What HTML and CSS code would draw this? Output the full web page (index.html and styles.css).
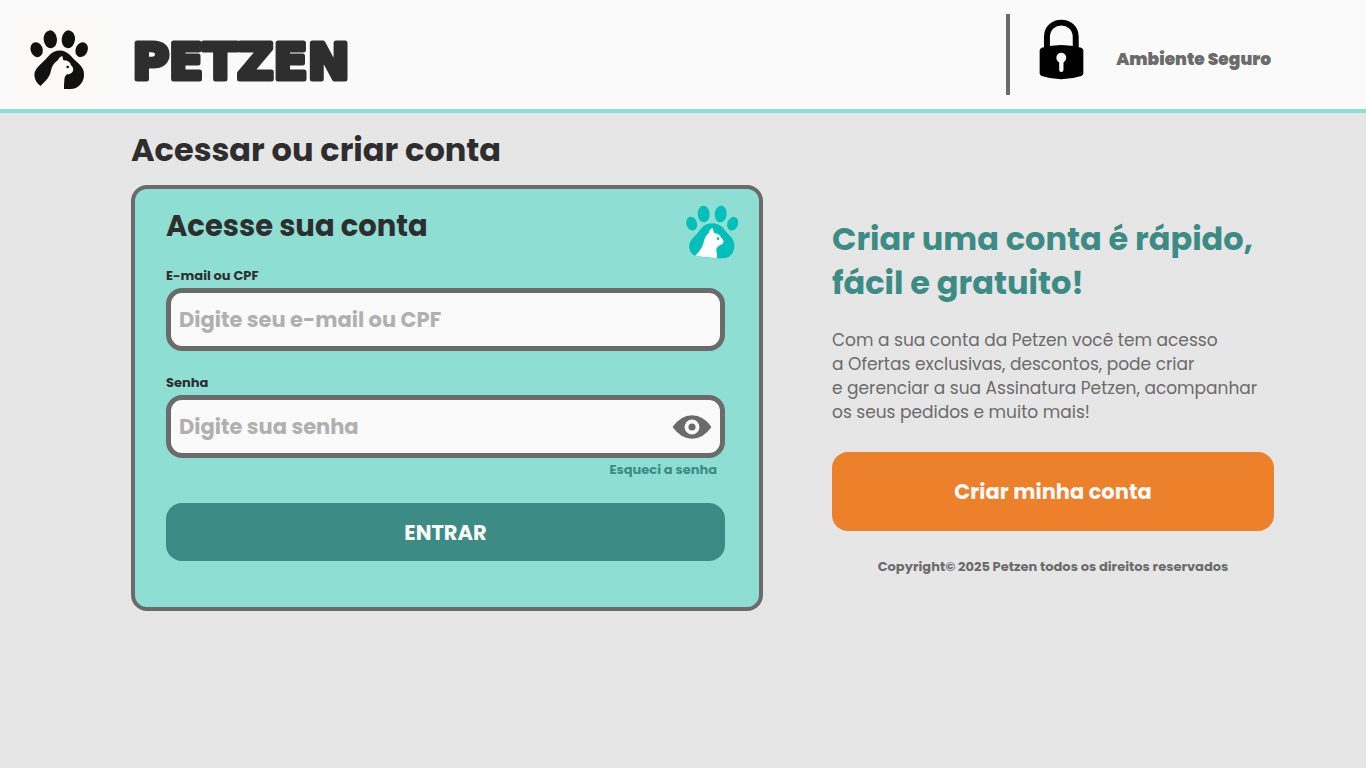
FILE: index.html
```html
<!DOCTYPE html>
<html lang="pt-BR">
<head>
<meta charset="utf-8">
<meta name="viewport" content="width=device-width, initial-scale=1">
<title>Petzen - Acessar ou criar conta</title>
<link rel="stylesheet" href="styles.css">
</head>
<body>
<header class="topbar">
  <a class="brand" href="#" aria-label="Petzen">
    <svg class="brand-mark" viewBox="48 12 255 279" aria-hidden="true">
      <rect x="48" y="12" width="255" height="279" fill="#fbf9f7"/>
      <g fill="#111">
        <ellipse cx="110" cy="119" rx="18" ry="23" transform="rotate(-20 110 119)"/>
        <ellipse cx="151" cy="88" rx="20" ry="27" transform="rotate(-6 151 88)"/>
        <ellipse cx="205" cy="88" rx="20" ry="27" transform="rotate(6 205 88)"/>
        <ellipse cx="245" cy="119" rx="18" ry="23" transform="rotate(24 245 119)"/>
        <path d="M122 228C103 215 98 191 109 177C120 163 134 152 145 139C163 115 195 116 213 138C224 152 246 165 251 183C257 214 237 237 211 237H150Z"/>
      </g>
      <path fill="#fbf9f7" d="M121 229C139 210 150 201 153 181C156 167 164 157 174 150C177 143 182 139 187 138L190 151C203 151 211 156 213 166C219 171 221 177 219 183C216 190 209 193 201 193C191 200 194 212 192 225V240H120Z"/>
      <circle cx="203" cy="171" r="4" fill="#111"/>
    </svg>
    <svg class="brand-name" viewBox="0 0 230 70" aria-hidden="true">
      <text x="115" y="53" text-anchor="middle">PETZEN</text>
    </svg>
  </a>
  <div class="secure">
    <svg class="lock" viewBox="147 42 136 184" aria-hidden="true">
      <path d="M171 130V97C171 38 258 38 258 97V130" fill="none" stroke="#000" stroke-width="18"/>
      <path d="M149 137Q149 132 155 129Q214 112 275 129Q281 132 281 137V206Q281 211 275 214Q214 234 155 214Q149 211 149 206Z"/>
      <path fill="#fafafa" d="M208 173C194 166 198 144 214 144C231 144 235 166 221 173V196Q221 202 214 202Q208 202 208 196Z"/>
    </svg>
    <span>Ambiente Seguro</span>
  </div>
</header>
<main class="page">
  <h1 class="page-title">Acessar ou criar conta</h1>
  <form class="card">
    <div class="card-head">
      <h2>Acesse sua conta</h2>
      <svg class="paw" viewBox="45 74 160 162" aria-hidden="true">
        <g fill="#03bfb9">
          <ellipse cx="64" cy="130" rx="16" ry="21" transform="rotate(-18 64 130)"/>
          <ellipse cx="100" cy="101" rx="18" ry="25" transform="rotate(-4 100 101)"/>
          <ellipse cx="151" cy="101" rx="18" ry="25" transform="rotate(6 151 101)"/>
          <ellipse cx="187" cy="130" rx="16" ry="21" transform="rotate(22 187 130)"/>
          <path d="M77 228C54 220 50 191 67 174C87 158 94 129 125 129C156 129 161 151 180 168C201 186 195 231 161 234H130Z"/>
        </g>
        <path fill="#fff" d="M74 227C94 206 98 195 102 178C105 166 111 162 116 157C117 149 121 144 127 143L131 158C142 158 150 165 153 173C160 177 162 187 155 192C147 195 142 198 139 204C136 213 142 221 140 234Z"/>
        <circle cx="143" cy="175" r="4" fill="#03bfb9"/>
      </svg>
    </div>
    <div class="field">
      <label for="login">E-mail ou CPF</label>
      <div class="control"><input id="login" type="text" placeholder="Digite seu e-mail ou CPF"></div>
    </div>
    <div class="field">
      <label for="password">Senha</label>
      <div class="control">
        <input id="password" type="password" placeholder="Digite sua senha">
        <button class="reveal" type="button" aria-label="Mostrar senha">
          <svg viewBox="48 89 122 74" aria-hidden="true">
            <path fill="#6b6b6b" d="M49 126Q75 90 109 90Q144 90 169 126Q144 162 109 162Q75 162 49 126Z"/>
            <circle cx="109" cy="126" r="17" fill="#6b6b6b" stroke="#fafafa" stroke-width="12"/>
          </svg>
        </button>
      </div>
    </div>
    <a class="forgot" href="#">Esqueci a senha</a>
    <button class="enter" type="submit">ENTRAR</button>
  </form>
  <section class="signup">
    <h2>Criar uma conta é rápido,<br>fácil e gratuito!</h2>
    <p>Com a sua conta da Petzen você tem acesso<br>a Ofertas exclusivas, descontos, pode criar<br>e gerenciar a sua Assinatura Petzen, acompanhar<br>os seus pedidos e muito mais!</p>
    <button class="create" type="button">Criar minha conta</button>
    <small>Copyright© 2025 Petzen todos os direitos reservados</small>
  </section>
</main>
</body>
</html>
```
FILE: styles.css
```css
* { box-sizing: border-box; }

body {
  margin: 0;
  min-height: 100vh;
  background: #e6e6e6;
  color: #2e2e2e;
  font-family: Poppins, Inter, sans-serif;
}

h1, h2, p { margin: 0; }
button, input { font-family: inherit; }
button { border: 0; cursor: pointer; }
svg { display: block; }

.topbar {
  display: flex;
  align-items: flex-start;
  justify-content: space-between;
  padding: 14px 95px 0 16px;
  min-height: 113px;
  background: #fafafa;
  border-bottom: 4px solid #8eded3;
}

.brand { display: flex; align-items: center; gap: 25px; }
.brand-mark { width: 85px; height: 93px; }
.brand-name { width: 230px; height: 70px; }

.brand-name text {
  font: 700 50px "DejaVu Sans", sans-serif;
  fill: #2e2e2e;
  stroke: #2e2e2e;
  stroke-width: 5px;
  stroke-linejoin: round;
}

.secure {
  display: flex;
  align-items: center;
  gap: 32px;
  height: 81px;
  padding-left: 29px;
  border-left: 4px solid #6b6b6b;
  color: #6b6b6b;
  font-size: 17px;
  font-weight: 900;
  line-height: 28px;
}

.lock { width: 45px; height: 61px; margin-bottom: 10px; }
.secure span { margin-top: 8px; }

.page {
  display: grid;
  grid-template-columns: 632fr 442fr;
  column-gap: 69px;
  align-items: start;
  padding: 13px 92px 40px 131px;
}

.page-title {
  grid-column: 1 / -1;
  margin-bottom: 11px;
  font-size: 32px;
  line-height: 48px;
}

.card {
  display: flex;
  flex-direction: column;
  padding: 16px 34px 46px 31px;
  background: #8eded3;
  border: 4px solid #6b6b6b;
  border-radius: 16px;
}

.card-head {
  display: flex;
  justify-content: space-between;
  margin: 0 -14px 8px 0;
}

.card-head h2 { font-size: 29px; line-height: 42px; }
.paw { width: 54px; height: 54px; }

.field { display: flex; flex-direction: column; gap: 3px; }
.field + .field { margin-top: 23px; }
.field label { font-size: 13px; font-weight: 700; line-height: 18px; }

.control {
  display: flex;
  align-items: center;
  height: 63px;
  padding: 0 8px;
  background: #fafafa;
  border: 5px solid #6b6b6b;
  border-radius: 16px;
}

.control input {
  flex: 1;
  min-width: 0;
  padding: 0;
  border: 0;
  outline: 0;
  background: transparent;
  color: #2e2e2e;
  font-size: 21px;
  font-weight: 700;
  line-height: 32px;
}

.control input::placeholder { color: #b0b0b0; opacity: 1; }

.reveal { padding: 0; background: transparent; }
.reveal svg { width: 40px; height: 24px; }

.forgot {
  align-self: flex-end;
  margin: 3px 8px 24px 0;
  color: #3c8c85;
  font-size: 13px;
  font-weight: 700;
  line-height: 18px;
  text-decoration: none;
}

.enter, .create {
  border-radius: 16px;
  color: #fafafa;
  font-size: 21px;
  font-weight: 700;
}

.enter { height: 58px; background: #3c8c85; }

.signup {
  display: flex;
  flex-direction: column;
  padding-top: 32px;
}

.signup h2 {
  color: #3c8c85;
  font-size: 32px;
  line-height: 44px;
}

.signup p {
  margin: 23px 0 28px;
  color: #6b6b6b;
  font-size: 17px;
  line-height: 24px;
}

.create { height: 79px; background: #ed802b; }

.signup small {
  margin-top: 27px;
  color: #6b6b6b;
  font-size: 13px;
  font-weight: 700;
  line-height: 18px;
  text-align: center;
}
```
